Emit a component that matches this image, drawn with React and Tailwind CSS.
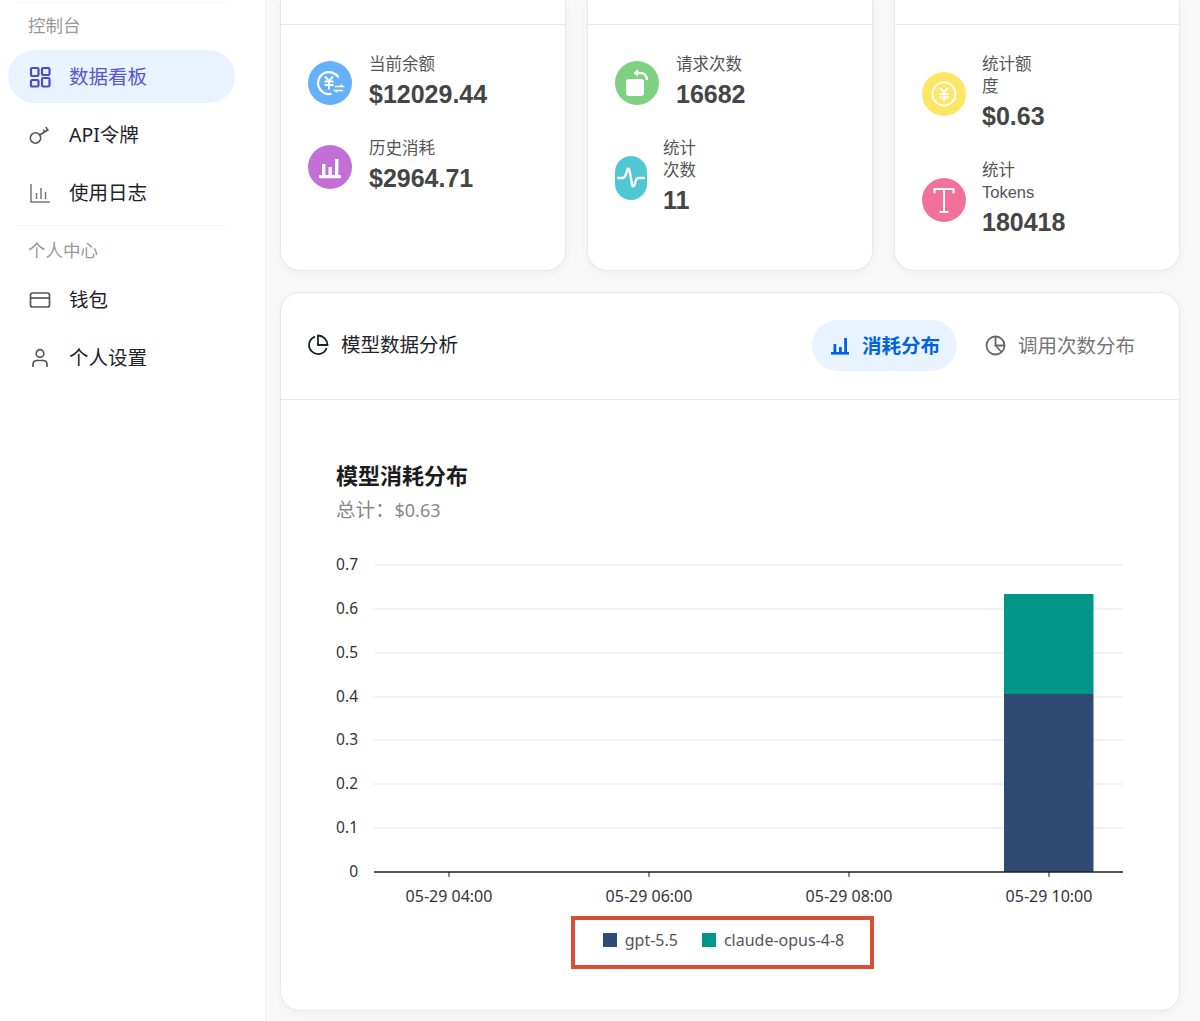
import React from "react";

const cjk = { fontFamily: '"Noto Sans", "Noto Sans CJK SC", sans-serif' };

const NavItem = ({ icon, label, active }) => (
  <div
    className={`flex items-center h-[53px] rounded-full pl-[21px] text-[19.5px] ${
      active ? "bg-[#e9f3ff] text-[#5a55d6]" : "text-[#1f2329]"
    }`}
  >
    <span className="w-[40px] flex-none">{icon}</span>
    <span>{label}</span>
  </div>
);

const DashIcon = () => (
  <svg width="22" height="22" viewBox="0 0 22 22" fill="none" stroke="#4f49d0" strokeWidth="2.2">
    <rect x="2" y="2" width="7.5" height="8" rx="1.2" />
    <rect x="13" y="2" width="7.5" height="7" rx="1.2" />
    <rect x="2" y="14" width="7.5" height="6.5" rx="1.2" />
    <rect x="13" y="12" width="7.5" height="8.5" rx="1.2" />
  </svg>
);

const KeyIcon = () => (
  <svg width="22" height="22" viewBox="0 0 22 22" fill="none" stroke="#555" strokeWidth="1.6">
    <circle cx="6.5" cy="14" r="5.2" />
    <path d="M10.7 11 L19.5 5.5" />
    <path d="M15.5 8 L14.2 5.5" />
    <path d="M18.5 6.2 L17 3" />
  </svg>
);

const LogIcon = () => (
  <svg width="22" height="22" viewBox="0 0 22 22" fill="none" stroke="#777" strokeWidth="1.5">
    <path d="M2 2 V20 H21" />
    <path d="M7.5 11 V17 M12 6 V17 M16.5 10 V17" />
  </svg>
);

const WalletIcon = () => (
  <svg width="22" height="22" viewBox="0 0 22 22" fill="none" stroke="#555" strokeWidth="1.7">
    <rect x="1.5" y="4" width="19" height="14" rx="2" />
    <path d="M1.5 9 H20.5" />
  </svg>
);

const UserIcon = () => (
  <svg width="22" height="22" viewBox="0 0 22 22" fill="none" stroke="#555" strokeWidth="1.7">
    <circle cx="11" cy="6.5" r="3.8" />
    <path d="M4 20 V17.5 C4 14.8 6 13.5 8 13.5 H14 C16 13.5 18 14.8 18 17.5 V20" />
  </svg>
);

const YenSwapIcon = () => (
  <svg width="30" height="30" viewBox="0 0 30 30" fill="none" stroke="#fff" strokeWidth="2">
    <path d="M23.5 9.5 A11 11 0 1 0 16.5 25.8" strokeWidth="2.2" />
    <path d="M10 8.5 L14 13 L18 8.5 M9.5 13.5 H18.5 M9.5 17 H18.5 M14 13 V21.5" strokeWidth="1.9" />
    <path d="M20 18.5 H28 L25.8 16.8 M28 22.5 H20 L22.2 24.2" strokeWidth="1.4" />
  </svg>
);

const BarsIcon = () => (
  <svg width="26" height="26" viewBox="0 0 26 26" fill="#fff">
    <rect x="5" y="10" width="3.4" height="11" />
    <rect x="11.5" y="13" width="3.4" height="8" />
    <rect x="18" y="5" width="3.4" height="16" />
    <rect x="2" y="21" width="22" height="3.2" rx="1" />
  </svg>
);

const RotateIcon = () => (
  <svg width="30" height="30" viewBox="0 0 30 30" fill="none">
    <rect x="4" y="11" width="18" height="17" rx="3" fill="#fff" />
    <path d="M14 5 H18 C22 5 25 7.5 25 12" stroke="#fff" strokeWidth="2.4" />
    <path d="M16 1 L11.5 5 L16 9 Z" fill="#fff" />
  </svg>
);

const PulseIcon = () => (
  <svg width="28" height="24" viewBox="0 0 28 24" fill="none" stroke="#fff" strokeWidth="2.4" strokeLinecap="round" strokeLinejoin="round">
    <path d="M1 12 H6 C7.5 12 8 10.5 9 8 L10.5 3.5 C11 2 12 2.5 12.5 4.5 L15 18 C15.5 21 17 21 17.8 18.5 L19 14 C19.5 12.5 20.5 12 21.5 12 H27" />
  </svg>
);

const CoinIcon = () => (
  <svg width="30" height="30" viewBox="0 0 30 30" fill="none" stroke="#fff" strokeWidth="2">
    <circle cx="15" cy="15" r="11.5" />
    <path d="M11 9 L15 13.5 L19 9 M10.5 15 H19.5 M10.5 18.5 H19.5 M15 13.5 V22" />
  </svg>
);

const TIcon = () => (
  <svg width="30" height="30" viewBox="0 0 30 30" fill="none" stroke="#fff" strokeWidth="2">
    <path d="M5.5 8.5 V4 H24.5 V8.5" />
    <path d="M15 4 V27 M10.5 27 H19.5" />
  </svg>
);

const Stat = ({ color, icon, label, value, iconW = "w-[44px]", gap = "mr-[17px]" }) => (
  <div className="flex items-center">
    <div className={`${iconW} ${gap} h-[44px] flex-none rounded-full flex items-center justify-center overflow-hidden ${color}`}>
      {icon}
    </div>
    <div>
      <div className="text-[16.5px] leading-[22px] text-[#555]" style={{ fontFamily: '"Liberation Sans", "Noto Sans CJK SC", sans-serif' }}>
        {label}
      </div>
      <div className="text-[25px] leading-[38px] font-bold text-[#454545]" style={{ fontFamily: '"Liberation Sans", sans-serif' }}>
        {value}
      </div>
    </div>
  </div>
);

const Card = ({ children }) => (
  <div className="h-[271px] bg-white rounded-b-[20px] border-x border-b border-[#e8e8ea] shadow-[0_2px_8px_rgba(0,0,0,0.04)]">
    <div className="h-[25px] border-b border-[#e9e9eb]" />
    <div className="pl-[27px] pt-[28px] flex flex-col gap-6">{children}</div>
  </div>
);

const gridY = [565, 609, 653, 697, 740, 784, 828];
const gridLabels = ["0.7", "0.6", "0.5", "0.4", "0.3", "0.2", "0.1"];
const ticks = [
  [449, "05-29 04:00"],
  [649, "05-29 06:00"],
  [849, "05-29 08:00"],
  [1049, "05-29 10:00"],
];

// chart coordinates are page coordinates, viewBox starts at the svg's own corner
const Chart = () => (
  <svg width="810" height="371" viewBox="330 545 810 371" className="block" style={{ fontFamily: '"Noto Sans", sans-serif' }}>
    {gridY.map((y, i) => (
      <g key={y}>
        <line x1="374" x2="1123" y1={y} y2={y} stroke="#e6e6e8" />
        <text x="358" y={y + 5} textAnchor="end" fontSize="15.5" fill="#333">{gridLabels[i]}</text>
      </g>
    ))}
    <rect x="1004" y="594" width="89.5" height="100" fill="#009688" />
    <rect x="1004" y="694" width="89.5" height="178" fill="#2f4b73" />
    <line x1="374" x2="1123" y1="872" y2="872" stroke="#1f1f1f" strokeWidth="1.4" />
    <text x="358" y="877" textAnchor="end" fontSize="15.5" fill="#333">0</text>
    {ticks.map(([x, t]) => (
      <g key={x}>
        <line x1={x} x2={x} y1="872" y2="877" stroke="#1f1f1f" />
        <text x={x} y="902" textAnchor="middle" fontSize="16" fill="#333">{t}</text>
      </g>
    ))}
  </svg>
);

export default function App() {
  return (
    <div className="flex h-[1021px] w-[1200px] overflow-hidden bg-[#f8f8f9]" style={cjk}>
      {/* Sidebar */}
      <aside className="w-[266px] flex-none bg-white border-r border-[#f0f0f2] pt-[2px] pl-[8px]">
        <div className="w-[227px]">
          <div className="mx-[8px] border-t border-[#f7f7f8]" />
          <div className="pl-[20px] pt-[10px] h-[47px] text-[17.5px] leading-[24px] text-[#999]">控制台</div>
          <NavItem active icon={<DashIcon />} label="数据看板" />
          <div className="mt-[5px]">
            <NavItem icon={<KeyIcon />} label="API令牌" />
          </div>
          <div className="mt-[5px]">
            <NavItem icon={<LogIcon />} label="使用日志" />
          </div>
          <div className="mx-[8px] mt-[6px] border-t border-[#f7f7f8]" />
          <div className="pl-[20px] pt-[12px] h-[47px] text-[17.5px] leading-[24px] text-[#999]">个人中心</div>
          <NavItem icon={<WalletIcon />} label="钱包" />
          <div className="mt-[5px]">
            <NavItem icon={<UserIcon />} label="个人设置" />
          </div>
        </div>
      </aside>

      {/* Main */}
      <main className="w-[914px] pl-[14px]">
        <div className="grid grid-cols-3 gap-x-[21px] w-[900px]">
          <Card>
            <Stat color="bg-[#64b0f9]" icon={<YenSwapIcon />} label="当前余额" value="$12029.44" />
            <Stat color="bg-[#c46fd6]" icon={<BarsIcon />} label="历史消耗" value="$2964.71" />
          </Card>
          <Card>
            <Stat color="bg-[#7dd180]" icon={<RotateIcon />} label="请求次数" value="16682" />
            <Stat
              color="bg-[#50c8d4]"
              icon={<PulseIcon />}
              iconW="w-[32px]"
              gap="mr-[16px]"
              label={<>统计<br />次数</>}
              value="11"
            />
          </Card>
          <Card>
            <Stat color="bg-[#ffe564]" icon={<CoinIcon />} label={<>统计额<br />度</>} value="$0.63" gap="mr-[16px]" />
            <Stat color="bg-[#f2719a]" icon={<TIcon />} label={<>统计<br />Tokens</>} value="180418" gap="mr-[16px]" />
          </Card>
        </div>

        <section className="mt-[21px] w-[900px] h-[719px] bg-white rounded-[20px] border border-[#e8e8ea] shadow-[0_2px_8px_rgba(0,0,0,0.04)]">
          <header className="h-[107px] pb-[1px] flex items-center justify-between pl-[26px] pr-[25px] border-b border-[#e9e9eb]">
            <div className="flex items-center gap-[12px] pb-[1px] text-[19.5px] text-[#1f2329]">
              <svg width="22" height="22" viewBox="0 0 22 22" fill="none" stroke="#1f2329" strokeWidth="1.8">
                <path d="M8 2.6 A9 9 0 1 0 19.6 14" />
                <path d="M11 1.5 A9.5 9.5 0 0 1 20.5 11 H11 Z" />
              </svg>
              模型数据分析
            </div>
            <div className="flex items-center gap-[9px]">
              <div className="h-[51px] flex items-center gap-[13px] pl-[19px] pr-[17px] rounded-full bg-[#e9f3ff] text-[19.5px] font-bold text-[#0064e0]">
                <svg width="18" height="18" viewBox="0 0 18 18" fill="#0064e0">
                  <rect x="2.5" y="7" width="2.8" height="8" />
                  <rect x="8" y="10" width="2.8" height="5" />
                  <rect x="13.2" y="1" width="2.8" height="14" />
                  <rect x="0" y="15" width="18" height="2.6" />
                </svg>
                消耗分布
              </div>
              <div className="h-[51px] flex items-center gap-[12px] px-[19px] text-[19.5px] text-[#777]">
                <svg width="21" height="21" viewBox="0 0 21 21" fill="none" stroke="#666" strokeWidth="1.8">
                  <circle cx="10.5" cy="10.5" r="9" />
                  <path d="M10.5 1.5 V10.5 H19.5" />
                  <path d="M10.5 10.5 L16.5 17" />
                </svg>
                调用次数分布
              </div>
            </div>
          </header>

          <div className="pl-[55px] pt-[58px]">
            <h2 className="text-[22px] leading-[34px] font-bold text-[#1c1c1e]">模型消耗分布</h2>
            <p className="mt-[1px] text-[18px] leading-[34px] text-[#888]">
              <span className="text-[19.5px]">总计：</span>$0.63
            </p>
          </div>

          <div className="pl-[49px] mt-[18px]">
            <Chart />
          </div>

          <div className="flex justify-center pr-[15px]">
            <div className="w-[303px] h-[53px] pl-[2px] pb-[6px] flex items-center justify-center gap-[24px] border-[4px] border-[#d94f35] text-[16px] text-[#555]">
              <span className="flex items-center gap-[8px]">
                <span className="w-[14px] h-[14px] bg-[#2f4b73]" />
                gpt-5.5
              </span>
              <span className="flex items-center gap-[8px]">
                <span className="w-[14px] h-[14px] bg-[#009688]" />
                claude-opus-4-8
              </span>
            </div>
          </div>
        </section>
      </main>
    </div>
  );
}
